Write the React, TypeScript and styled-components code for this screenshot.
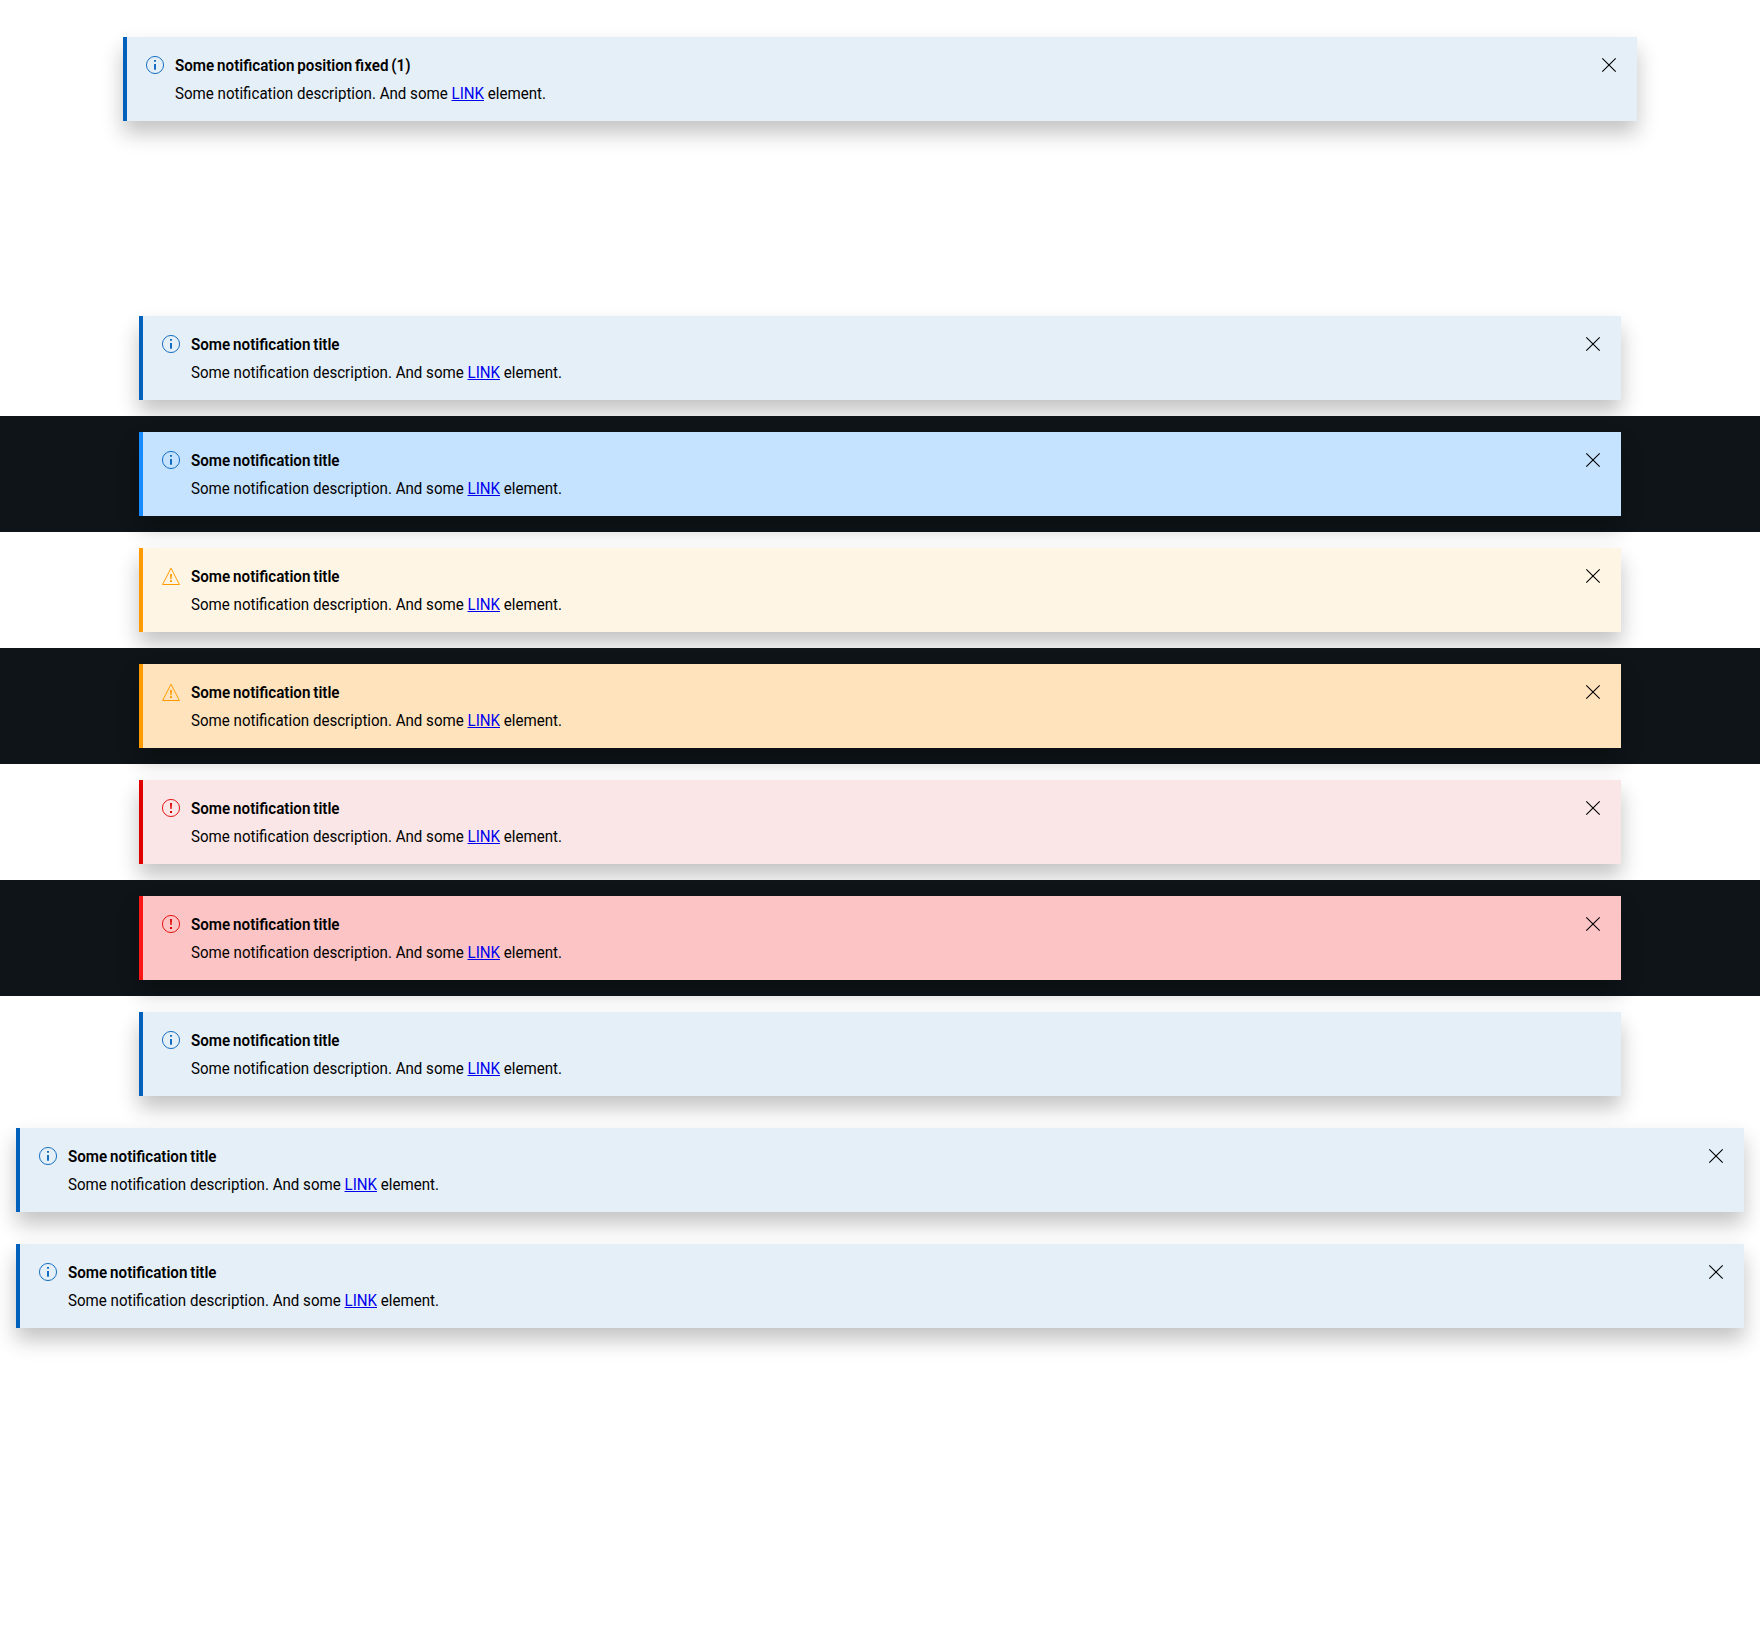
import React from 'react';
import styled, { createGlobalStyle } from 'styled-components';

type State = 'info' | 'warning' | 'error';
type Theme = 'light' | 'dark';

const palette = {
  light: {
    info: { edge: '#0061bd', fill: '#e5eff8' },
    warning: { edge: '#ff9b00', fill: '#fff5e5' },
    error: { edge: '#e00000', fill: '#fae6e6' },
  },
  dark: {
    info: { edge: '#178bff', fill: '#c5e2ff' },
    warning: { edge: '#ff9b00', fill: '#ffe3bd' },
    error: { edge: '#fc1717', fill: '#fcc4c4' },
  },
};

const GlobalStyle = createGlobalStyle`
  body {
    margin: 0;
    background: #fff;
    color: #000;
    font: 400 16px/24px Roboto, 'Liberation Sans', sans-serif;
  }
`;

const Page = styled.main`
  display: flex;
  flex-direction: column;
  min-height: 1644px;
`;

const FixedArea = styled.header`
  height: 263px;
  padding: 37px 123px 0;
`;

const Row = styled.section<{ $theme: Theme; $wide?: boolean }>`
  padding: 16px ${(p) => (p.$wide ? '16px' : '139px')};
  background: ${(p) => (p.$theme === 'dark' ? '#0e1418' : 'transparent')};
`;

const Card = styled.div<{ $state: State; $theme: Theme }>`
  box-sizing: border-box;
  display: flex;
  align-items: flex-start;
  gap: 8px;
  height: 84px;
  padding: 16px;
  border-left: 4px solid ${(p) => palette[p.$theme][p.$state].edge};
  background: ${(p) => palette[p.$theme][p.$state].fill};
  box-shadow: 0 12px 20px rgba(0, 0, 0, 0.24);
`;

const Icon = styled.svg<{ $state: State }>`
  flex: none;
  width: 24px;
  height: 24px;
  color: ${(p) => palette.light[p.$state].edge};
`;

const Content = styled.div`
  flex: 1;
  display: flex;
  flex-direction: column;
  align-items: flex-start;
  gap: 4px;
  padding-top: 1px;
  white-space: nowrap;
`;

const Title = styled.h5`
  margin: 0;
  font-size: 16.5px;
  font-weight: 600;
  word-spacing: -1px;
  transform: scaleX(0.92);
  transform-origin: left;
`;

const Description = styled.p`
  margin: 0;
  font-size: 16.5px;
  transform: scaleX(0.915);
  transform-origin: left;
`;

const Link = styled.a`
  color: #0000ee;
  text-decoration: underline;
`;

const CloseButton = styled.button`
  flex: none;
  width: 24px;
  height: 24px;
  padding: 0;
  border: 0;
  background: none;
  color: #000;

  svg {
    display: block;
  }
`;

const StateIcon = ({ state }: { state: State }) => (
  <Icon $state={state} viewBox="0 0 24 24" fill="none">
    {state === 'warning' ? (
      <path d="M12 4.2 20.4 20.5H3.6Z" stroke="currentColor" />
    ) : (
      <circle cx="12" cy="12" r="8.55" stroke="currentColor" strokeWidth="0.9" />
    )}
    {state === 'info' && <path d="M11.1 7h1.8v1.8h-1.8zM11.1 11h1.8v5.8h-1.8z" fill="currentColor" />}
    {state === 'warning' && (
      <path d="M11 10h2l-.4 5.3h-1.2zM11 16.3h2V18h-2z" fill="currentColor" />
    )}
    {state === 'error' && <path d="M11 7h2l-.4 6h-1.2zM11 15h2v2h-2z" fill="currentColor" />}
  </Icon>
);

interface BannerProps {
  title?: string;
  state?: State;
  theme?: Theme;
  closable?: boolean;
}

const Banner = ({
  title = 'Some notification title',
  state = 'info',
  theme = 'light',
  closable = true,
}: BannerProps) => (
  <Card $state={state} $theme={theme}>
    <StateIcon state={state} />
    <Content>
      <Title>{title}</Title>
      <Description>
        Some notification description. And some <Link href="#">LINK</Link> element.
      </Description>
    </Content>
    {closable && (
      <CloseButton aria-label="Close notification">
        <svg width="24" height="24" viewBox="0 0 24 24" fill="none">
          <path d="M5.3 5.3 18.7 18.7M18.7 5.3 5.3 18.7" stroke="currentColor" strokeWidth="1.1" />
        </svg>
      </CloseButton>
    )}
  </Card>
);

const rows: (BannerProps & { wide?: boolean })[] = [
  { state: 'info' },
  { state: 'info', theme: 'dark' },
  { state: 'warning' },
  { state: 'warning', theme: 'dark' },
  { state: 'error' },
  { state: 'error', theme: 'dark' },
  { closable: false },
  { wide: true },
  { wide: true },
];

export default function App() {
  return (
    <Page>
      <GlobalStyle />
      <FixedArea>
        <Banner title="Some notification position fixed (1)" />
      </FixedArea>
      {rows.map(({ wide, ...banner }, i) => (
        <Row key={i} $theme={banner.theme ?? 'light'} $wide={wide}>
          <Banner {...banner} />
        </Row>
      ))}
    </Page>
  );
}
